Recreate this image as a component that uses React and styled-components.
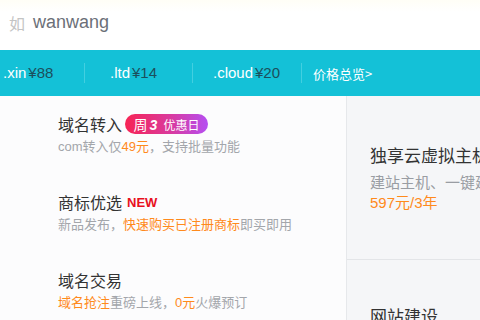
import React from "react";
import styled, { createGlobalStyle } from "styled-components";

const Global = createGlobalStyle`
  html, body {
    margin: 0;
    padding: 0;
    width: 480px;
    height: 320px;
    overflow: hidden;
    background: #ffffff;
    font-family: "Liberation Sans", "Noto Sans CJK SC", sans-serif;
  }
`;

const prices = [
  { tld: ".xin", price: "¥88", width: 85, pad: 3 },
  { tld: ".ltd", price: "¥14", width: 108, pad: 25 },
  { tld: ".cloud", price: "¥20", width: 109, pad: 20 },
];

const items = [
  {
    title: "域名转入",
    badge: true,
    desc: [
      { t: "com转入仅" },
      { t: "49元", hot: true },
      { t: "，支持批量功能" },
    ],
  },
  {
    title: "商标优选",
    isNew: true,
    desc: [
      { t: "新品发布，" },
      { t: "快速购买已注册商标", hot: true },
      { t: "即买即用" },
    ],
  },
  {
    title: "域名交易",
    desc: [
      { t: "域名抢注", hot: true },
      { t: "重磅上线，" },
      { t: "0元", hot: true },
      { t: "火爆预订" },
    ],
  },
];

const App = () => {
  return (
    <Page>
      <Global />
      <Search>
        <Hint>如</Hint>
        <Query>wanwang</Query>
      </Search>
      <PriceBar>
        {prices.map((p) => (
          <PriceCell key={p.tld} $w={p.width} $pad={p.pad}>
            <Tld>{p.tld}</Tld>
            <Price>{p.price}</Price>
          </PriceCell>
        ))}
        <Overview $pad={11}>价格总览&gt;</Overview>
      </PriceBar>
      <Main>
        <Left>
          {items.map((it) => (
            <Item key={it.title}>
              <TitleRow>
                <Title>{it.title}</Title>
                {it.badge && (
                  <Badge>
                    <Week>
                      周<b>3</b>
                    </Week>
                    <span>优惠日</span>
                  </Badge>
                )}
                {it.isNew && <New>NEW</New>}
              </TitleRow>
              <Desc>
                {it.desc.map((d, i) => (
                  <Seg key={i} $hot={d.hot}>
                    {d.t}
                  </Seg>
                ))}
              </Desc>
            </Item>
          ))}
        </Left>
        <Right>
          <Promo>
            <PromoTitle>独享云虚拟主机</PromoTitle>
            <PromoDesc>建站主机、一键建站</PromoDesc>
            <PromoPrice>597元/3年</PromoPrice>
          </Promo>
          <Promo $last>
            <PromoTitle>网站建设</PromoTitle>
          </Promo>
        </Right>
      </Main>
    </Page>
  );
};

export default App;

const Page = styled.div`
  width: 480px;
  height: 320px;
  display: flex;
  flex-direction: column;
  overflow: hidden;
`;

const Search = styled.div`
  height: 50px;
  flex: none;
  display: flex;
  align-items: center;
  padding: 0 0 5px 9px;
  box-sizing: border-box;
  background: linear-gradient(#fffef6, #ffffff 12px);
  font-size: 18px;
`;

const Hint = styled.span`
  color: #c4c4c4;
  font-family: "Noto Sans CJK SC", sans-serif;
  font-size: 16px;
  margin-right: 8px;
`;

const Query = styled.span`
  color: #6b6f78;
`;

const PriceBar = styled.div`
  height: 46px;
  flex: none;
  background: #14c1d7;
  display: flex;
  align-items: center;
  font-size: 15px;
`;

const PriceCell = styled.div`
  width: ${(p) => p.$w}px;
  box-sizing: border-box;
  padding-left: ${(p) => p.$pad}px;
  border-right: 1px solid #42cfe0;
  height: 20px;
  line-height: 20px;
  white-space: nowrap;
`;

const Tld = styled.span`
  color: #ffffff;
  margin-right: 2px;
`;

const Price = styled.span`
  color: #1c4f5c;
`;

const Overview = styled.span`
  padding-left: ${(p) => p.$pad}px;
  color: #ffffff;
  font-size: 13px;
  font-family: "Noto Sans CJK SC", sans-serif;
`;

const Main = styled.div`
  flex: 1;
  display: flex;
  min-height: 0;
`;

const Left = styled.div`
  width: 347px;
  flex: none;
  background: #fcfcfd;
  border-right: 1px solid #e6e8eb;
  padding-left: 58px;
  box-sizing: border-box;
`;

const Item = styled.div`
  height: 78px;
  padding-top: 17px;
  box-sizing: border-box;
`;

const TitleRow = styled.div`
  display: flex;
  align-items: center;
  height: 22px;
`;

const Title = styled.span`
  font-family: "Noto Sans CJK SC", sans-serif;
  font-size: 16px;
  color: #333333;
`;

const Badge = styled.span`
  margin-left: 3px;
  height: 20px;
  width: 83px;
  border-radius: 10px;
  background: linear-gradient(90deg, #f72454 0%, #d93a9e 55%, #b54ef2 100%);
  color: #ffffff;
  display: flex;
  align-items: center;
  justify-content: center;
  gap: 6px;
  font-family: "Noto Sans CJK SC", sans-serif;
  font-size: 12px;
`;

const Week = styled.span`
  font-size: 14px;
  b {
    font-family: "Liberation Sans", sans-serif;
    font-weight: 900;
    font-style: italic;
    margin-left: 2px;
  }
`;

const New = styled.span`
  margin-left: 5px;
  color: #e8111e;
  font-weight: bold;
  font-size: 13px;
`;

const Desc = styled.div`
  margin-top: 2px;
  height: 20px;
  line-height: 20px;
  font-size: 13px;
  color: #a3a6ab;
  font-family: "Liberation Sans", "Noto Sans CJK SC", sans-serif;
  white-space: nowrap;
`;

const Seg = styled.span`
  color: ${(p) => (p.$hot ? "#ff8a1c" : "inherit")};
`;

const Right = styled.div`
  flex: 1;
  background: #f5f6f8;
  overflow: hidden;
`;

const Promo = styled.div`
  height: ${(p) => (p.$last ? "auto" : "164px")};
  padding: ${(p) => (p.$last ? "44px" : "47px")} 0 0 23px;
  box-sizing: border-box;
  border-bottom: ${(p) => (p.$last ? "none" : "1px solid #e3e5e8")};
  white-space: nowrap;
`;

const PromoTitle = styled.div`
  font-family: "Noto Sans CJK SC", sans-serif;
  font-size: 17px;
  line-height: 24px;
  color: #333333;
`;

const PromoDesc = styled.div`
  margin-top: 4px;
  font-family: "Noto Sans CJK SC", sans-serif;
  font-size: 15px;
  line-height: 22px;
  color: #999da3;
`;

const PromoPrice = styled.div`
  font-size: 15px;
  line-height: 20px;
  color: #ff8a1c;
  font-family: "Liberation Sans", "Noto Sans CJK SC", sans-serif;
`;
